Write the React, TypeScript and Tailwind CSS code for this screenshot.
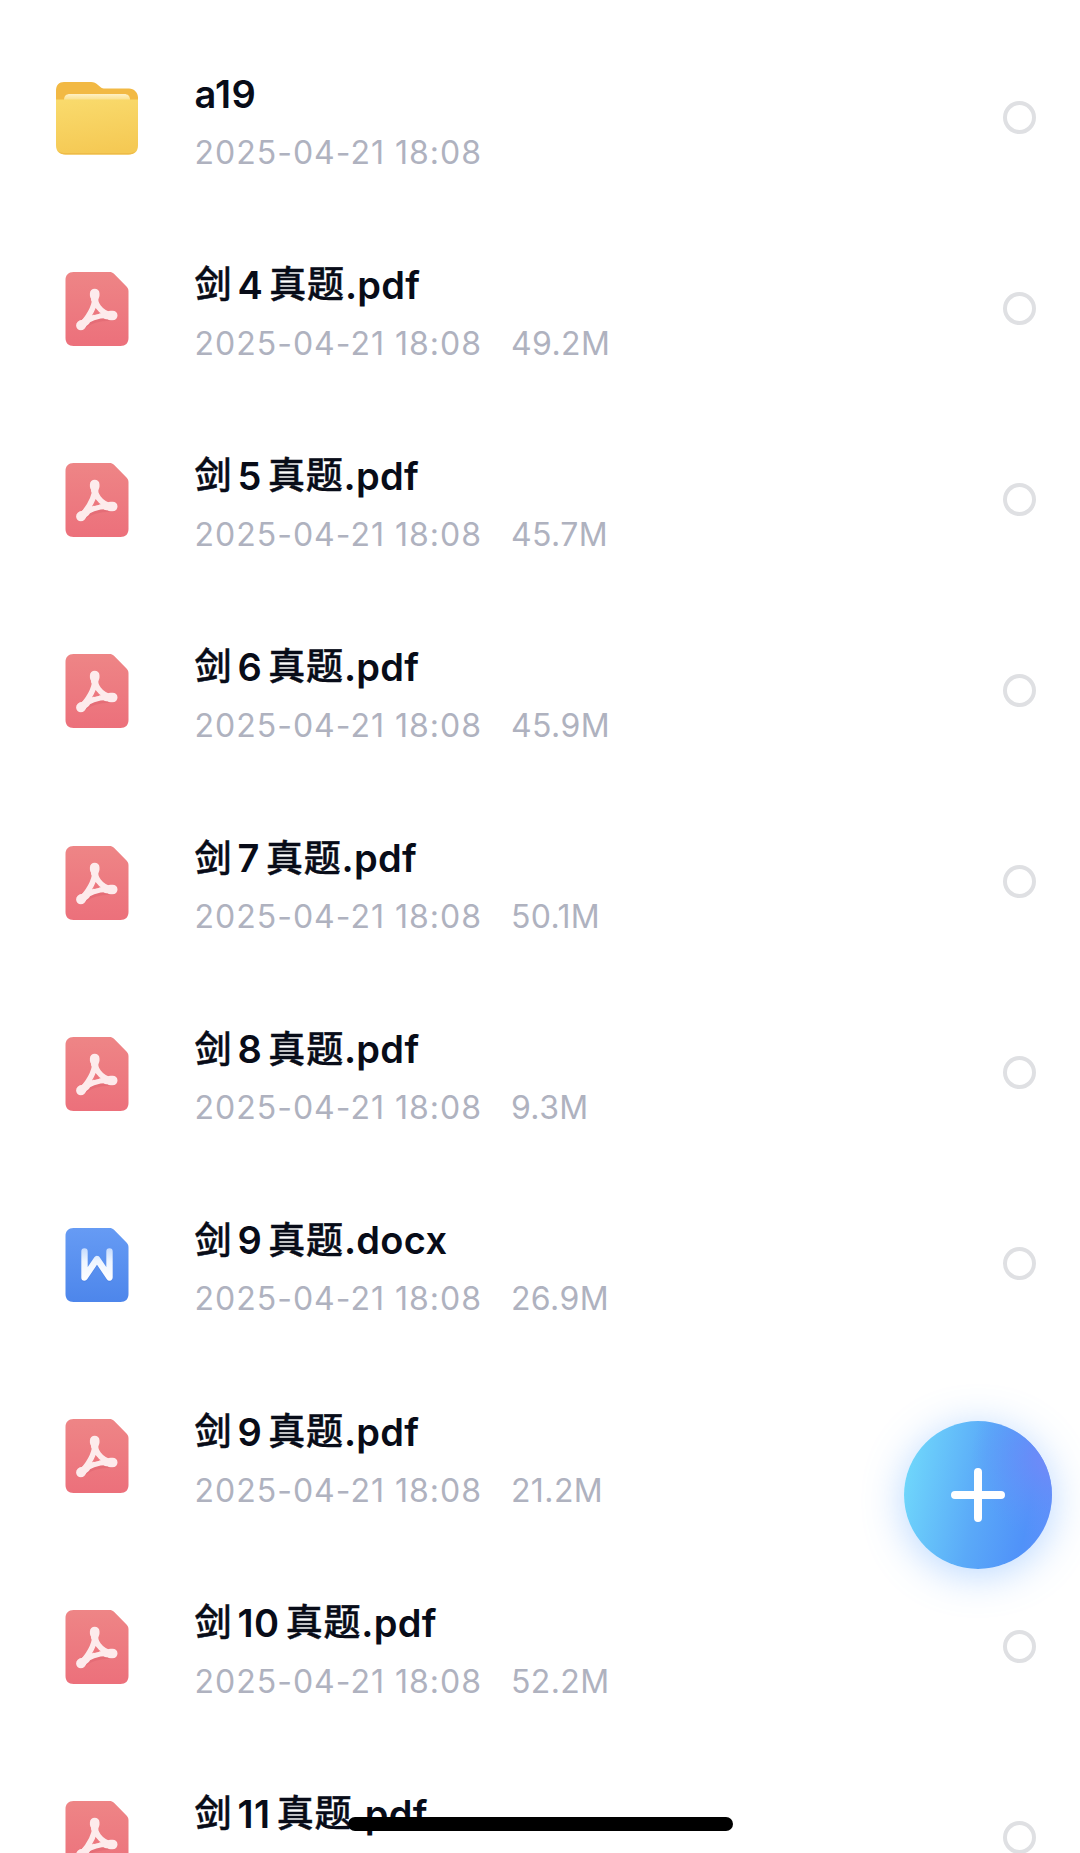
type FileKind = "folder" | "pdf" | "word";

interface FileItem {
  kind: FileKind;
  prefix?: string;
  num?: string;
  suffix?: string;
  ext: string;
  date?: string;
  size?: string;
}

const date = "2025-04-21 18:08";

const files: FileItem[] = [
  { kind: "folder", ext: "a19", date },
  { kind: "pdf", prefix: "剑", num: "4", suffix: "真题", ext: ".pdf", date, size: "49.2M" },
  { kind: "pdf", prefix: "剑", num: "5", suffix: "真题", ext: ".pdf", date, size: "45.7M" },
  { kind: "pdf", prefix: "剑", num: "6", suffix: "真题", ext: ".pdf", date, size: "45.9M" },
  { kind: "pdf", prefix: "剑", num: "7", suffix: "真题", ext: ".pdf", date, size: "50.1M" },
  { kind: "pdf", prefix: "剑", num: "8", suffix: "真题", ext: ".pdf", date, size: "9.3M" },
  { kind: "word", prefix: "剑", num: "9", suffix: "真题", ext: ".docx", date, size: "26.9M" },
  { kind: "pdf", prefix: "剑", num: "9", suffix: "真题", ext: ".pdf", date, size: "21.2M" },
  { kind: "pdf", prefix: "剑", num: "10", suffix: "真题", ext: ".pdf", date, size: "52.2M" },
  { kind: "pdf", prefix: "剑", num: "11", suffix: "真题", ext: ".pdf" },
];

function FolderIcon() {
  return (
    <svg width="82" height="74" viewBox="0 0 82 74" fill="none">
      <defs>
        <linearGradient id="folder-front" x1="0.2" y1="0" x2="0.4" y2="1">
          <stop stopColor="#f9da6c" />
          <stop offset="1" stopColor="#f5c954" />
        </linearGradient>
        <linearGradient id="folder-paper" x1="0" y1="0" x2="0" y2="1">
          <stop stopColor="#fff0c4" />
          <stop offset="1" stopColor="#fae08b" />
        </linearGradient>
      </defs>
      <path d="M0 10C0 4 3 1 8 1h27c3 0 5 1 7 3l3 2.500c1 .8 2 1 4 1h24c5 0 9 4 9 9V40H0z" fill="#f2b944" />
      <path d="M8 19c0-4 2-6 6-6h54c4 0 6 2 6 6z" fill="url(#folder-paper)" />
      <path d="M0 18.500h82V64c0 6-3 9.500-9 9.500H9c-6 0-9-3.500-9-9.500z" fill="url(#folder-front)" />
      <path d="M2 70c2 2.400 4 3.500 8 3.500h62c4 0 6-1.100 8-3.500-2 1.500-4 2-8 2H10c-4 0-6-.5-8-2z" fill="#eebb48" />
    </svg>
  );
}

function PdfIcon() {
  return (
    <svg width="64" height="74" viewBox="-0.5 0 64 74" fill="none">
      <defs>
        <linearGradient id="pdf-sheet" x1="0" y1="0" x2="0" y2="1">
          <stop stopColor="#ee8586" />
          <stop offset="1" stopColor="#ec707b" />
        </linearGradient>
      </defs>
      <path d="M8 0h36c2 0 3 .5 4.500 1.800L61 14.500c1.500 1.500 2 3 2 5V66c0 5-3 8-8 8H8c-5 0-8-3-8-8V8c0-5 3-8 8-8z" fill="url(#pdf-sheet)" />
      {/* three lobes joined around a small open triangle */}
      <g transform="translate(0 1.200)" stroke="#d9606c" strokeOpacity=".4" strokeLinecap="round" strokeWidth="8">
        <path d="M16 53C22 47 34 43 47 43.500" />
      </g>
      <g stroke="#fdebec" strokeLinecap="round" strokeLinejoin="round">
        <path d="M29.200 21.500C28.500 31 34 41 47.200 43.500C36 42.500 24 45.500 16.200 52.700C23 45 31 33 29.200 21.500z" strokeWidth="5.600" />
        <path d="M29.200 21.500v2M47.200 43.500h-2M16.200 52.700l-.8.8" strokeWidth="9.600" />
        <path d="M29.200 22v5M46 43.500h-5M16.500 52.400l4-3" strokeWidth="7.500" />
      </g>
      <path d="M30.800 37.500l3 4.300-5.500 1.300z" fill="#ec767e" />
    </svg>
  );
}

function WordIcon() {
  return (
    <svg width="64" height="74" viewBox="-0.5 0 64 74" fill="none">
      <defs>
        <linearGradient id="word-sheet" x1="0" y1="0" x2="0" y2="1">
          <stop stopColor="#669bf4" />
          <stop offset="1" stopColor="#4d86eb" />
        </linearGradient>
        <linearGradient id="word-mark" gradientUnits="userSpaceOnUse" x1="0" y1="20" x2="0" y2="53">
          <stop stopColor="#c4dafd" />
          <stop offset=".4" stopColor="#eef5ff" />
          <stop offset="1" stopColor="#fff" />
        </linearGradient>
      </defs>
      <path d="M8 0h36c2 0 3 .5 4.500 1.800L61 14.500c1.500 1.500 2 3 2 5V66c0 5-3 8-8 8H8c-5 0-8-3-8-8V8c0-5 3-8 8-8z" fill="url(#word-sheet)" />
      <path d="M19 23.500v26L31.500 31 44 49.500v-26" stroke="#3e75db" strokeOpacity=".4" strokeWidth="6.500" strokeLinecap="round" strokeLinejoin="round" transform="translate(0 1)" />
      <path d="M19 23.500v26L31.500 31 44 49.500v-26" stroke="url(#word-mark)" strokeWidth="6.400" strokeLinecap="round" strokeLinejoin="round" />
    </svg>
  );
}

function FileIcon({ kind }: { kind: FileKind }) {
  if (kind === "folder") return <FolderIcon />;
  if (kind === "word") return <WordIcon />;
  return <PdfIcon />;
}

function FileRow({ file }: { file: FileItem }) {
  return (
    <div className="flex h-[191.15px] shrink-0 items-center pl-[56px] pr-[44.5px]">
      <div className="flex w-[82px] shrink-0 justify-center pt-[2px]">
        <FileIcon kind={file.kind} />
      </div>

      <div className="ml-[56.5px] flex-1 pt-[8px] whitespace-nowrap">
        <div className="flex h-[48px] items-center text-[38px] leading-[48px] font-[570] text-[#080c18]">
          {file.prefix && <span className="pt-[1px] text-[37px] font-medium [-webkit-text-stroke:0.5px_#080c18]">{file.prefix}</span>}
          {file.num && <span className="mx-[6px] tracking-[0.5px]">{file.num}</span>}
          {file.suffix && <span className="pt-[1px] text-[37px] font-medium tracking-[0.8px] [-webkit-text-stroke:0.5px_#080c18]">{file.suffix}</span>}
          <span className="tracking-[0.3px]">{file.ext}</span>
        </div>
        <div className="mt-[15px] flex h-[40px] items-center gap-[29px] text-[32px] leading-[40px] font-[370] text-[#afb2bf]">
          {file.date && <span className="tracking-[1px]">{file.date}</span>}
          {file.size && <span className="tracking-[0.4px]">{file.size}</span>}
        </div>
      </div>

      <div className="h-[33px] w-[33px] rounded-full border-4 border-[#dfe0e3]"></div>
    </div>
  );
}

export default function App() {
  return (
    <div className="relative h-[1853px] w-[1080px] overflow-hidden bg-white font-['Inter','Noto_Sans_CJK_SC',sans-serif]">
      {/* File list */}
      <main className="flex flex-col pt-[21.5px]">
        {files.map((file, i) => (
          <FileRow key={i} file={file} />
        ))}
      </main>

      {/* Add button, covers the selector of the row behind it */}
      <button className="absolute top-[1421px] left-[903.5px] h-[148px] w-[148px] rounded-full shadow-[0_6px_40px_rgba(86,160,255,0.42)]">
        <svg width="148" height="148" viewBox="0 0 148 148" fill="none">
          <defs>
            <linearGradient id="fab" x1="0" y1=".4" x2="1" y2=".6">
              <stop stopColor="#6fd6fb" />
              <stop offset=".5" stopColor="#5aa9f8" />
              <stop offset=".85" stopColor="#5092f9" />
              <stop offset="1" stopColor="#5b90fa" />
            </linearGradient>
            <radialGradient id="fab-tint" cx="1" cy=".25" r=".55">
              <stop stopColor="#7489f7" />
              <stop offset=".3" stopColor="#6c8bf8" stopOpacity=".75" />
              <stop offset="1" stopColor="#6095f9" stopOpacity="0" />
            </radialGradient>
          </defs>
          <circle cx="74" cy="74" r="74" fill="url(#fab)" />
          <circle cx="74" cy="74" r="74" fill="url(#fab-tint)" />
          <path d="M74 51v46M51 74h46" stroke="#fff" strokeWidth="8" strokeLinecap="round" />
        </svg>
      </button>

      {/* Home indicator */}
      <div className="absolute top-[1817px] left-[348px] h-[14px] w-[385px] rounded-full bg-black"></div>
    </div>
  );
}
